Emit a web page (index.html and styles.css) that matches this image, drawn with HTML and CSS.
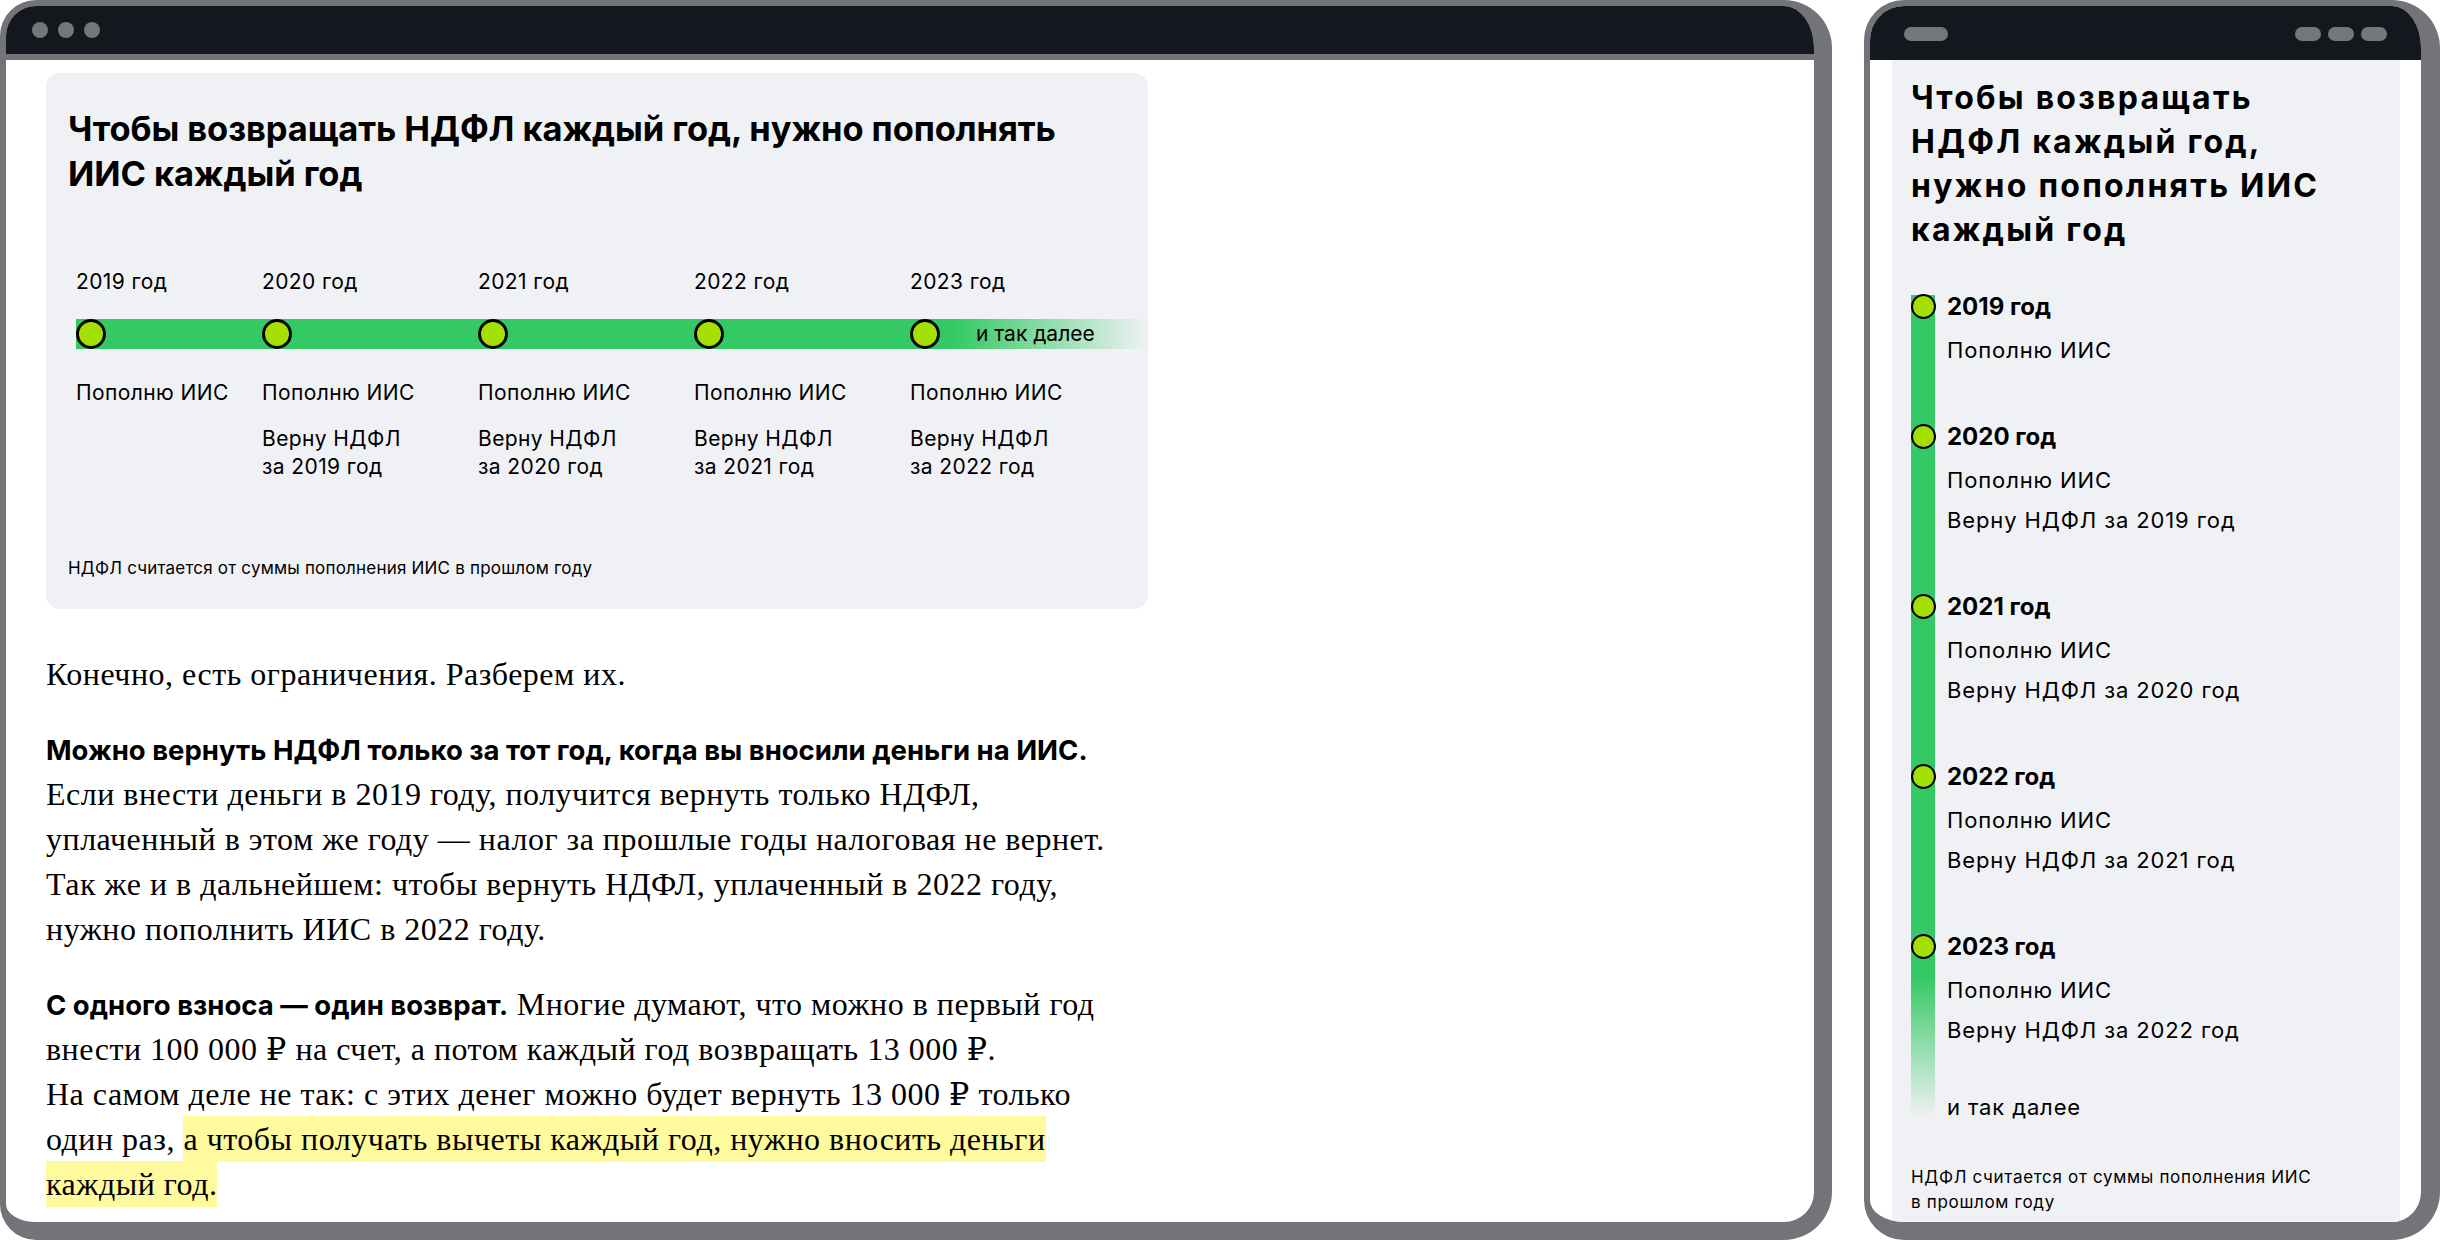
FILE: index.html
```html
<!DOCTYPE html>
<html lang="ru">
<head>
<meta charset="utf-8">
<title>ИИС каждый год</title>
<link rel="stylesheet" href="styles.css">
</head>
<body>
<div class="stage">
  <section class="desktop">
    <div class="dbar">
      <span class="dot"></span><span class="dot"></span><span class="dot"></span>
    </div>
    <div class="dpage">
      <figure class="card">
        <h2 class="card-title">Чтобы возвращать НДФЛ каждый год, нужно пополнять ИИС каждый год</h2>
        <div class="tl">
          <div class="tl-row tl-years">
            <span>2019 год</span><span>2020 год</span><span>2021 год</span><span>2022 год</span><span>2023 год</span>
          </div>
          <div class="tl-row tl-bar">
            <span class="cell"><i class="pin"></i></span>
            <span class="cell"><i class="pin"></i></span>
            <span class="cell"><i class="pin"></i></span>
            <span class="cell"><i class="pin"></i></span>
            <span class="cell"><i class="pin"></i><em class="more">и так далее</em></span>
          </div>
          <div class="tl-row tl-notes">
            <div class="note"><p>Пополню ИИС</p></div>
            <div class="note"><p>Пополню ИИС</p><p class="ret">Верну НДФЛ<br>за 2019 год</p></div>
            <div class="note"><p>Пополню ИИС</p><p class="ret">Верну НДФЛ<br>за 2020 год</p></div>
            <div class="note"><p>Пополню ИИС</p><p class="ret">Верну НДФЛ<br>за 2021 год</p></div>
            <div class="note"><p>Пополню ИИС</p><p class="ret">Верну НДФЛ<br>за 2022 год</p></div>
          </div>
        </div>
        <figcaption class="foot">НДФЛ считается от суммы пополнения ИИС в прошлом году</figcaption>
      </figure>
      <article class="article">
        <p>Конечно, есть ограничения. Разберем их.</p>
        <p><b class="lead">Можно вернуть НДФЛ только за тот год, когда вы вносили деньги на ИИС.</b> Если внести деньги в 2019 году, получится вернуть только НДФЛ, уплаченный в этом же году — налог за прошлые годы налоговая не вернет. Так же и в дальнейшем: чтобы вернуть НДФЛ, уплаченный в 2022 году, нужно пополнить ИИС в 2022 году.</p>
        <p><b class="lead">С одного взноса — один возврат.</b> Многие думают, что можно в первый год внести 100&nbsp;000&nbsp;₽ на счет, а потом каждый год возвращать 13&nbsp;000&nbsp;₽.<br>На самом деле не так: с этих денег можно будет вернуть 13&nbsp;000&nbsp;₽ только один раз, <mark class="hl">а чтобы получать вычеты каждый год, нужно вносить деньги каждый год.</mark></p>
      </article>
    </div>
  </section>

  <section class="mobile">
    <div class="mbar">
      <span class="pill pill-wide"></span>
      <span class="pills"><span class="pill"></span><span class="pill"></span><span class="pill"></span></span>
    </div>
    <div class="mpage">
      <div class="mcard">
        <h2 class="m-title">Чтобы возвращать НДФЛ каждый год, нужно пополнять ИИС каждый год</h2>
        <div class="mtl">
          <div class="mitem"><i class="mpin"></i><div class="mtext"><b>2019 год</b><p class="first">Пополню ИИС</p></div></div>
          <div class="mitem"><i class="mpin"></i><div class="mtext"><b>2020 год</b><p class="first">Пополню ИИС</p><p>Верну НДФЛ за 2019 год</p></div></div>
          <div class="mitem"><i class="mpin"></i><div class="mtext"><b>2021 год</b><p class="first">Пополню ИИС</p><p>Верну НДФЛ за 2020 год</p></div></div>
          <div class="mitem"><i class="mpin"></i><div class="mtext"><b>2022 год</b><p class="first">Пополню ИИС</p><p>Верну НДФЛ за 2021 год</p></div></div>
          <div class="mitem"><i class="mpin"></i><div class="mtext"><b>2023 год</b><p class="first">Пополню ИИС</p><p>Верну НДФЛ за 2022 год</p></div></div>
          <p class="mmore">и так далее</p>
        </div>
        <p class="mfoot">НДФЛ считается от суммы пополнения ИИС в прошлом году</p>
      </div>
    </div>
  </section>
</div>
</body>
</html>
```

FILE: styles.css
```css
* { box-sizing: border-box; margin: 0; padding: 0; }

html, body {
  width: 2440px;
  height: 1240px;
  overflow: hidden;
  background: #ffffff;
}

body {
  font-family: Inter, "Noto Sans", sans-serif;
  color: #000;
}

.stage {
  display: flex;
  gap: 32px;
  height: 1240px;
}

/* ---------- desktop frame ---------- */
.desktop {
  width: 1832px;
  height: 1240px;
  flex: none;
  background: #fff;
  border: solid #737479;
  border-width: 6px 18px 18px 6px;
  border-radius: 36px 48px 48px 36px;
  overflow: hidden;
  display: flex;
  flex-direction: column;
}

.dbar {
  height: 54px;
  flex: none;
  background: #15171e;
  border-bottom: 6px solid #737479;
  display: flex;
  align-items: center;
  gap: 10px;
  padding-left: 26px;
}

.dot {
  width: 16px;
  height: 16px;
  border-radius: 50%;
  background: #75767b;
}

.dpage {
  padding: 13px 0 0 40px;
}

.card {
  width: 1102px;
  background: #f0f1f4;
  border-radius: 14px;
  padding: 33px 22px 29px 22px;
}

.card-title {
  font-size: 34.5px;
  line-height: 45px;
  font-weight: 700;
  max-width: 1010px;
  letter-spacing: -0.1px;
}

.tl {
  margin: 71px 0 0 8px;
}

.tl-row {
  display: grid;
  grid-template-columns: 186px 216px 216px 216px 1fr;
}

.tl-years {
  font-size: 21px;
  line-height: 30px;
  letter-spacing: 0.4px;
}

.tl-bar {
  margin-top: 22px;
  margin-right: -22px;
  height: 30px;
  background: linear-gradient(90deg, #35c965 0%, #35c965 82%, rgba(53, 201, 101, 0) 100%);
}

.cell {
  display: flex;
  align-items: center;
}

.pin {
  width: 30px;
  height: 30px;
  border-radius: 50%;
  background: #a3df00;
  border: 3px solid #000;
  flex: none;
}

.more {
  font-style: normal;
  font-size: 21px;
  line-height: 30px;
  margin-left: 36px;
}

.tl-notes {
  margin-top: 29px;
  font-size: 21px;
  line-height: 30px;
  letter-spacing: 0.4px;
}

.ret {
  margin-top: 17px;
  line-height: 28px;
}

.foot {
  margin-top: 75px;
  font-size: 17px;
  line-height: 24px;
  letter-spacing: 0.2px;
}

/* ---------- article text ---------- */
.article {
  width: 1082px;
  margin-top: 43px;
  font-family: "Liberation Serif", "DejaVu Serif", serif;
  font-size: 32px;
  line-height: 45px;
  letter-spacing: 0.5px;
}

.article p + p {
  margin-top: 30px;
}

.lead {
  font-family: Inter, "Noto Sans", sans-serif;
  font-weight: 700;
  font-size: 27.5px;
  line-height: 1;
  letter-spacing: 0;
}

.hl {
  background: #fffa9e;
  color: inherit;
  padding: 4.8px 0;
}

/* ---------- mobile frame ---------- */
.mobile {
  width: 576px;
  height: 1240px;
  flex: none;
  background: #fff;
  border: solid #737479;
  border-width: 6px 19px 18px 6px;
  border-radius: 40px 48px 48px 40px;
  overflow: hidden;
  display: flex;
  flex-direction: column;
}

.mbar {
  height: 54px;
  flex: none;
  background: #15171e;
  display: flex;
  align-items: center;
  justify-content: space-between;
  padding: 2px 34px 0 34px;
}

.pill {
  display: block;
  width: 26px;
  height: 14px;
  border-radius: 7px;
  background: #75767b;
}

.pill-wide {
  width: 44px;
}

.pills {
  display: flex;
  gap: 7px;
}

.mpage {
  flex: 1;
  min-height: 0;
  overflow: hidden;
  padding: 0 21px 0 22px;
}

.mcard {
  background: #f0f1f4;
  padding: 16px 19px 24px 19px;
  min-height: 100%;
}

.m-title {
  font-size: 32px;
  line-height: 44px;
  font-weight: 700;
  letter-spacing: 0.07em;
  max-width: 430px;
}

.mtl {
  position: relative;
  margin-top: 35px;
}

.mtl::before {
  content: "";
  position: absolute;
  left: 0;
  top: 8px;
  bottom: 10px;
  width: 24px;
  background: linear-gradient(180deg, #35c965 0%, #35c965 83%, rgba(53, 201, 101, 0) 100%);
}

.mitem {
  position: relative;
  display: grid;
  grid-template-columns: 36px 1fr;
}

.mitem + .mitem {
  margin-top: 47px;
}

.mpin {
  width: 25px;
  height: 25px;
  margin-top: 7px;
  margin-left: -0.5px;
  border-radius: 50%;
  background: #a3df00;
  border: 2.5px solid #000;
}

.mtext b {
  display: block;
  font-size: 24px;
  line-height: 40px;
  font-weight: 700;
}

.mtext p {
  font-size: 22px;
  line-height: 40px;
  letter-spacing: 0.04em;
}

.mtext p.first {
  margin-top: 3px;
}

.mmore {
  position: relative;
  margin-top: 37px;
  padding-left: 36px;
  font-size: 22px;
  line-height: 40px;
  letter-spacing: 0.04em;
}

.mfoot {
  margin-top: 38px;
  font-size: 17px;
  line-height: 25px;
  letter-spacing: 0.04em;
  max-width: 405px;
}
```
